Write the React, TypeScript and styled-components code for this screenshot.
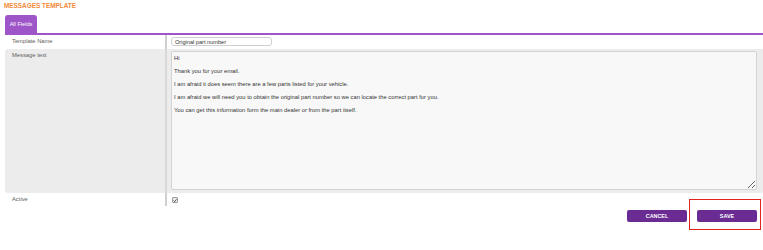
import styled, { createGlobalStyle } from "styled-components";

const GlobalStyle = createGlobalStyle`
  body {
    margin: 0;
    background: #fff;
    font-family: "Liberation Sans", Arial, sans-serif;
  }
`;

const Page = styled.div`
  width: 763px;
  height: 250px;
  overflow: hidden;
  padding-left: 5px;
  box-sizing: border-box;
`;

const Title = styled.h1`
  margin: 0;
  height: 15px;
  padding: 2px 0 0 0;
  box-sizing: border-box;
  margin-left: -1px;
  font-size: 6.4px;
  font-weight: bold;
  color: #f28a38;
`;

const TabBar = styled.div`
  display: flex;
  border-bottom: 2px solid #9d55c8;
`;

const Tab = styled.div`
  width: 32px;
  height: 18px;
  display: flex;
  align-items: center;
  justify-content: center;
  background: #9d55c8;
  color: #fff;
  font-size: 5.6px;
  border-radius: 3px 3px 0 0;
`;

const Row = styled.div<{ $shaded?: boolean; $height: number }>`
  display: grid;
  grid-template-columns: 160px 1fr;
  height: ${({ $height }) => $height}px;
  margin-top: ${({ $shaded }) => ($shaded ? "2px" : "0")};
  background: ${({ $shaded }) => ($shaded ? "#ececec" : "transparent")};
  border-radius: ${({ $shaded }) => ($shaded ? "3px 0 0 3px" : "0")};
`;

const Label = styled.div`
  padding: 3px 0 0 7px;
  font-size: 5.8px;
  color: #5e5e5e;
`;

const Value = styled.div<{ $shaded?: boolean }>`
  border-left: 2px solid ${({ $shaded }) => ($shaded ? "#d8d8d8" : "#cfcfcf")};
  padding: 2px 6px 3px 4px;
  display: flex;
  align-items: flex-start;
`;

const TextInput = styled.input`
  width: 101px;
  height: 9px;
  box-sizing: border-box;
  border: 1px solid #cfcfcf;
  border-radius: 3px;
  padding: 0 3px;
  font-family: inherit;
  font-size: 5.6px;
  color: #333;
  outline: none;
`;

const MessageBox = styled.textarea`
  flex: 1;
  height: 139px;
  margin: 0;
  box-sizing: border-box;
  border: 1px solid #d4d4d4;
  border-radius: 2px;
  background: #f8f8f8;
  padding: 3px 2px;
  font-family: inherit;
  font-size: 5.8px;
  line-height: 6.5px;
  color: #333;
  resize: both;
  outline: none;
`;

const Check = styled.span`
  width: 6px;
  height: 6px;
  margin: 2px 0 0 1px;
  box-sizing: border-box;
  border: 1px solid #999;
  border-radius: 1px;
  background: #eee;
  display: flex;
  align-items: center;
  justify-content: center;

  & svg {
    width: 5px;
    height: 5px;
  }
`;

const Footer = styled.div`
  display: flex;
  justify-content: flex-end;
  align-items: center;
  gap: 10px;
  padding: 5px 6px 0 0;
`;

const Button = styled.button`
  display: block;
  width: 60px;
  height: 12px;
  border: none;
  border-radius: 2px;
  background: #6a2c92;
  color: #fff;
  font-family: inherit;
  font-size: 5.4px;
  font-weight: bold;
  padding: 0;
  cursor: pointer;
`;

const Highlight = styled.div`
  position: relative;
  display: flex;

  &::after {
    content: "";
    position: absolute;
    left: -8px;
    right: -4px;
    top: -11px;
    bottom: -8px;
    border: 1px solid #e0231f;
    pointer-events: none;
  }
`;

const message = [
  "Hi",
  "Thank you for your email.",
  "I am afraid it does seem there are a few parts listed for your vehicle.",
  "I am afraid we will need you to obtain the original part number so we can locate the correct part for you.",
  "You can get this information form the main dealer or from the part itself.",
].join("\n\n");

export default function App() {
  return (
    <>
      <GlobalStyle />
      <Page>
        <Title>MESSAGES TEMPLATE</Title>
        <TabBar>
          <Tab>All Fields</Tab>
        </TabBar>
        <Row $height={12}>
          <Label>Template Name</Label>
          <Value>
            <TextInput defaultValue="Original part number" />
          </Value>
        </Row>
        <Row $shaded $height={144}>
          <Label>Message text</Label>
          <Value $shaded>
            <MessageBox defaultValue={message} readOnly />
          </Value>
        </Row>
        <Row $height={12}>
          <Label>Active</Label>
          <Value>
            <Check>
              <svg viewBox="0 0 10 10">
                <path d="M1.5 5.2 L4 7.8 L8.8 2" fill="none" stroke="#333" strokeWidth="2" />
              </svg>
            </Check>
          </Value>
        </Row>
        <Footer>
          <Button>CANCEL</Button>
          <Highlight>
            <Button>SAVE</Button>
          </Highlight>
        </Footer>
      </Page>
    </>
  );
}
